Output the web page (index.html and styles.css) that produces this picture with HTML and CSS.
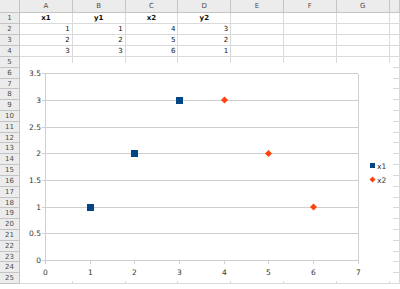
FILE: index.html
```html
<!DOCTYPE html>
<html>
  <head>
    <meta name="viewport" content="width=device-width, initial-scale=1">
    <link rel="stylesheet" href="styles.css">
  </head>

  <body>
    <div class="sheet" id="Sheet">
      <div class="corner"></div>
      <div class="colhead">A</div>
      <div class="colhead">B</div>
      <div class="colhead">C</div>
      <div class="colhead">D</div>
      <div class="colhead">E</div>
      <div class="colhead">F</div>
      <div class="colhead">G</div>
      <div class="colhead"></div>

      <div class="rowhead">1</div>
      <div class="cell head">x1</div><div class="cell head">y1</div><div class="cell head">x2</div><div class="cell head">y2</div>
      <div class="cell"></div><div class="cell"></div><div class="cell"></div><div class="cell"></div>

      <div class="rowhead">2</div>
      <div class="cell num">1</div><div class="cell num">1</div><div class="cell num">4</div><div class="cell num">3</div>
      <div class="cell"></div><div class="cell"></div><div class="cell"></div><div class="cell"></div>

      <div class="rowhead">3</div>
      <div class="cell num">2</div><div class="cell num">2</div><div class="cell num">5</div><div class="cell num">2</div>
      <div class="cell"></div><div class="cell"></div><div class="cell"></div><div class="cell"></div>

      <div class="rowhead">4</div>
      <div class="cell num">3</div><div class="cell num">3</div><div class="cell num">6</div><div class="cell num">1</div>
      <div class="cell"></div><div class="cell"></div><div class="cell"></div><div class="cell"></div>
    </div>

    <!-- Chart over the cells -->
    <div class="chart">
      <svg width="373" height="218" viewBox="0 0 373 218" shape-rendering="crispEdges">
        <g class="grid">
          <line x1="22" y1="10.5" x2="338" y2="10.5"/>
          <line x1="22" y1="37.5" x2="338" y2="37.5"/>
          <line x1="22" y1="64.5" x2="338" y2="64.5"/>
          <line x1="22" y1="90.5" x2="338" y2="90.5"/>
          <line x1="22" y1="117.5" x2="338" y2="117.5"/>
          <line x1="22" y1="144.5" x2="338" y2="144.5"/>
          <line x1="22" y1="170.5" x2="338" y2="170.5"/>
          <line x1="22" y1="197.5" x2="338.5" y2="197.5"/>
          <line x1="25.5" y1="10.5" x2="25.5" y2="201"/>
          <line x1="338.5" y1="10.5" x2="338.5" y2="201"/>
          <line x1="70.5" y1="197.5" x2="70.5" y2="201"/>
          <line x1="114.5" y1="197.5" x2="114.5" y2="201"/>
          <line x1="159.5" y1="197.5" x2="159.5" y2="201"/>
          <line x1="204.5" y1="197.5" x2="204.5" y2="201"/>
          <line x1="248.5" y1="197.5" x2="248.5" y2="201"/>
          <line x1="293.5" y1="197.5" x2="293.5" y2="201"/>
        </g>
        <g class="ylabels">
          <text x="21" y="10.5">3.5</text>
          <text x="21" y="37.5">3</text>
          <text x="21" y="64.5">2.5</text>
          <text x="21" y="90.5">2</text>
          <text x="21" y="117.5">1.5</text>
          <text x="21" y="144.5">1</text>
          <text x="21" y="170.5">0.5</text>
          <text x="21" y="197.5">0</text>
        </g>
        <g class="xlabels">
          <text x="25.5" y="209">0</text>
          <text x="70.5" y="209">1</text>
          <text x="114.5" y="209">2</text>
          <text x="159.5" y="209">3</text>
          <text x="204.5" y="209">4</text>
          <text x="248.5" y="209">5</text>
          <text x="293.5" y="209">6</text>
          <text x="338.5" y="209">7</text>
        </g>
        <g class="x1">
          <rect x="67" y="141" width="7" height="7"/>
          <rect x="111" y="87" width="7" height="7"/>
          <rect x="156" y="34" width="7" height="7"/>
          <rect x="350" y="100" width="5" height="5"/>
        </g>
        <g class="x2" shape-rendering="auto">
          <polygon points="204.5,33.5 208,37 204.5,40.5 201,37"/>
          <polygon points="248.5,87 252,90.5 248.5,94 245,90.5"/>
          <polygon points="293.5,140.5 297,144 293.5,147.5 290,144"/>
          <polygon points="352.5,113.5 355.5,116.5 352.5,119.5 349.5,116.5"/>
        </g>
        <g class="legend">
          <text x="357" y="103">x1</text>
          <text x="357" y="117">x2</text>
        </g>
      </svg>
    </div>

    <script>
      <!-- Filas vacias 5 a 25 -->
      var sheet = document.getElementById("Sheet");
      for (var r = 5; r <= 25; r++) {
      var head = document.createElement("div");
      head.className = "rowhead";
      head.innerHTML = r;
      sheet.appendChild(head);
      for (var c = 0; c < 8; c++) {
      var cell = document.createElement("div");
      cell.className = "cell";
      sheet.appendChild(cell);
      }
      }
    </script>
  </body>
</html>
```

FILE: styles.css
```css
/* Sheet grid */
body {
margin: 0;
background: #ffffff;
font-family: "DejaVu Sans", sans-serif;
overflow: hidden;
}

.sheet {
display: grid;
grid-template-columns: 20px repeat(7, 52.8px) 1fr;
grid-template-rows: 12.6px repeat(4, 11.1px);
grid-auto-rows: 10.82px;
font-size: 7px;
line-height: 10px;
}

.corner,
.colhead,
.rowhead {
background: #ececec;
color: #4d4d4d;
border-right: 1px solid #c4c4c4;
border-bottom: 1px solid #c4c4c4;
box-sizing: border-box;
text-align: center;
}

.colhead {
line-height: 12px;
}

.cell {
border-right: 1px solid #dadada;
border-bottom: 1px solid #dadada;
box-sizing: border-box;
color: #111111;
white-space: nowrap;
overflow: hidden;
}

.head {
font-weight: bold;
text-align: center;
}

.num {
text-align: right;
padding-right: 2px;
}

/* Chart over the cells */
.chart {
position: absolute;
left: 20px;
top: 63px;
width: 373px;
height: 218px;
background: #ffffff;
}

.chart svg {
display: block;
}

.grid line {
stroke: #cfcfcf;
stroke-width: 1;
}

.chart text {
font-family: "DejaVu Sans", sans-serif;
font-size: 7.5px;
fill: #333333;
dominant-baseline: central;
}

.ylabels text {
text-anchor: end;
}

.xlabels text {
text-anchor: middle;
}

.x1 rect {
fill: #004586;
}

.x2 polygon {
fill: #ff420e;
}
```
